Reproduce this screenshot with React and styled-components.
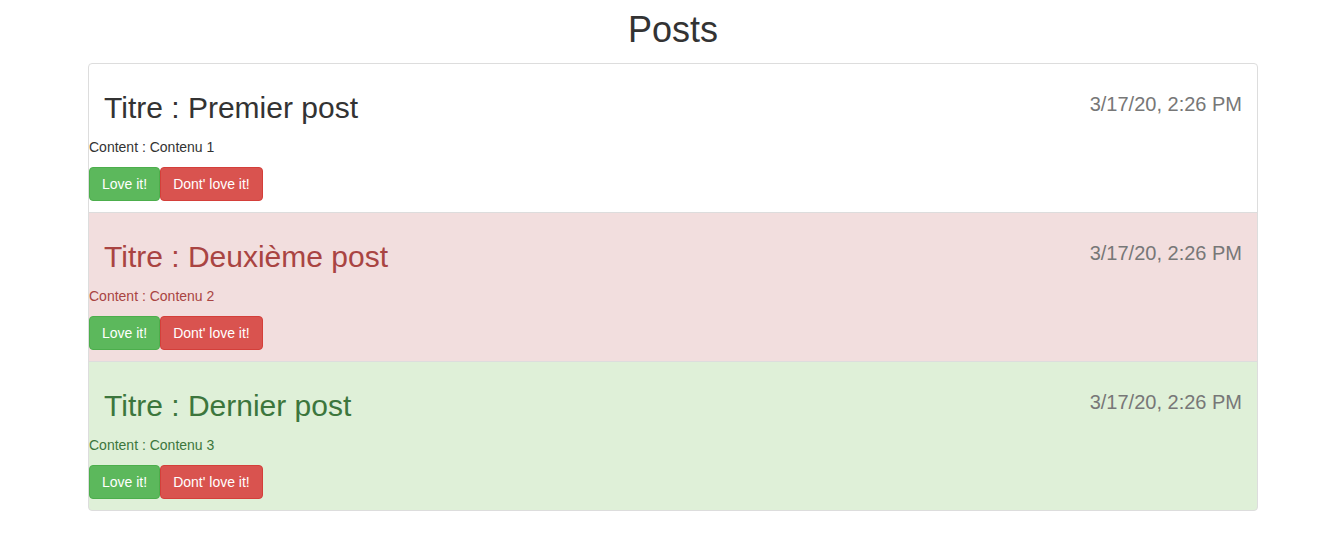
import React from "react";
import styled, { createGlobalStyle, css } from "styled-components";

const GlobalStyle = createGlobalStyle`
  body {
    margin: 0;
    background: #fff;
    font-family: "Liberation Sans", Arial, Helvetica, sans-serif;
    font-size: 14px;
    line-height: 1.42857;
    color: #333;
  }
  * { box-sizing: border-box; }
`;

const Container = styled.div`
  width: 1170px;
  margin-left: 88px;
`;

const PageTitle = styled.h1`
  margin: 10px 0 13px;
  font-size: 36px;
  font-weight: 500;
  line-height: 40px;
  text-align: center;
  color: #333;
`;

const ListGroup = styled.div`
  display: flex;
  flex-direction: column;
`;

const variants = {
  default: css`
    background: #fff;
    color: #333;
  `,
  danger: css`
    background: #f2dede;
    color: #a94442;
  `,
  success: css`
    background: #dff0d8;
    color: #3c763d;
  `,
};

const Item = styled.div`
  border: 1px solid #ddd;
  margin-bottom: -1px;
  padding: 0 0 10px;
  ${(p) => variants[p.$variant]}

  &:first-child {
    border-top-left-radius: 4px;
    border-top-right-radius: 4px;
  }
  &:last-child {
    margin-bottom: 0;
    border-bottom-left-radius: 4px;
    border-bottom-right-radius: 4px;
  }
`;

const Header = styled.div`
  display: flex;
  justify-content: space-between;
  align-items: flex-start;
  padding: 10px 15px 0;
`;

const ItemTitle = styled.h2`
  margin: 17px 0 13px;
  font-size: 30px;
  font-weight: 500;
  line-height: 33px;
`;

const Date = styled.small`
  margin-top: 19px;
  font-size: 20px;
  line-height: 22px;
  color: #777;
`;

const Content = styled.p`
  margin: 0 0 10px;
  font-size: 14px;
  line-height: 20px;
`;

const ButtonRow = styled.div`
  display: flex;
  height: 35px;
`;

const Button = styled.button`
  height: 34px;
  padding: 6px 12px;
  font-family: inherit;
  font-size: 14px;
  line-height: 20px;
  color: #fff;
  border: 1px solid ${(p) => (p.$kind === "success" ? "#4cae4c" : "#d43f3a")};
  background: ${(p) => (p.$kind === "success" ? "#5cb85c" : "#d9534f")};
  border-radius: 4px;
  cursor: pointer;
`;

const posts = [
  { title: "Premier post", content: "Contenu 1", variant: "default" },
  { title: "Deuxième post", content: "Contenu 2", variant: "danger" },
  { title: "Dernier post", content: "Contenu 3", variant: "success" },
];

export default function App() {
  return (
    <>
      <GlobalStyle />
      <Container>
        <PageTitle>Posts</PageTitle>
        <ListGroup>
          {posts.map((post) => (
            <Item key={post.title} $variant={post.variant}>
              <Header>
                <ItemTitle>Titre : {post.title}</ItemTitle>
                <Date>3/17/20, 2:26 PM</Date>
              </Header>
              <Content>Content : {post.content}</Content>
              <ButtonRow>
                <Button $kind="success">Love it!</Button>
                <Button $kind="danger">Dont' love it!</Button>
              </ButtonRow>
            </Item>
          ))}
        </ListGroup>
      </Container>
    </>
  );
}
